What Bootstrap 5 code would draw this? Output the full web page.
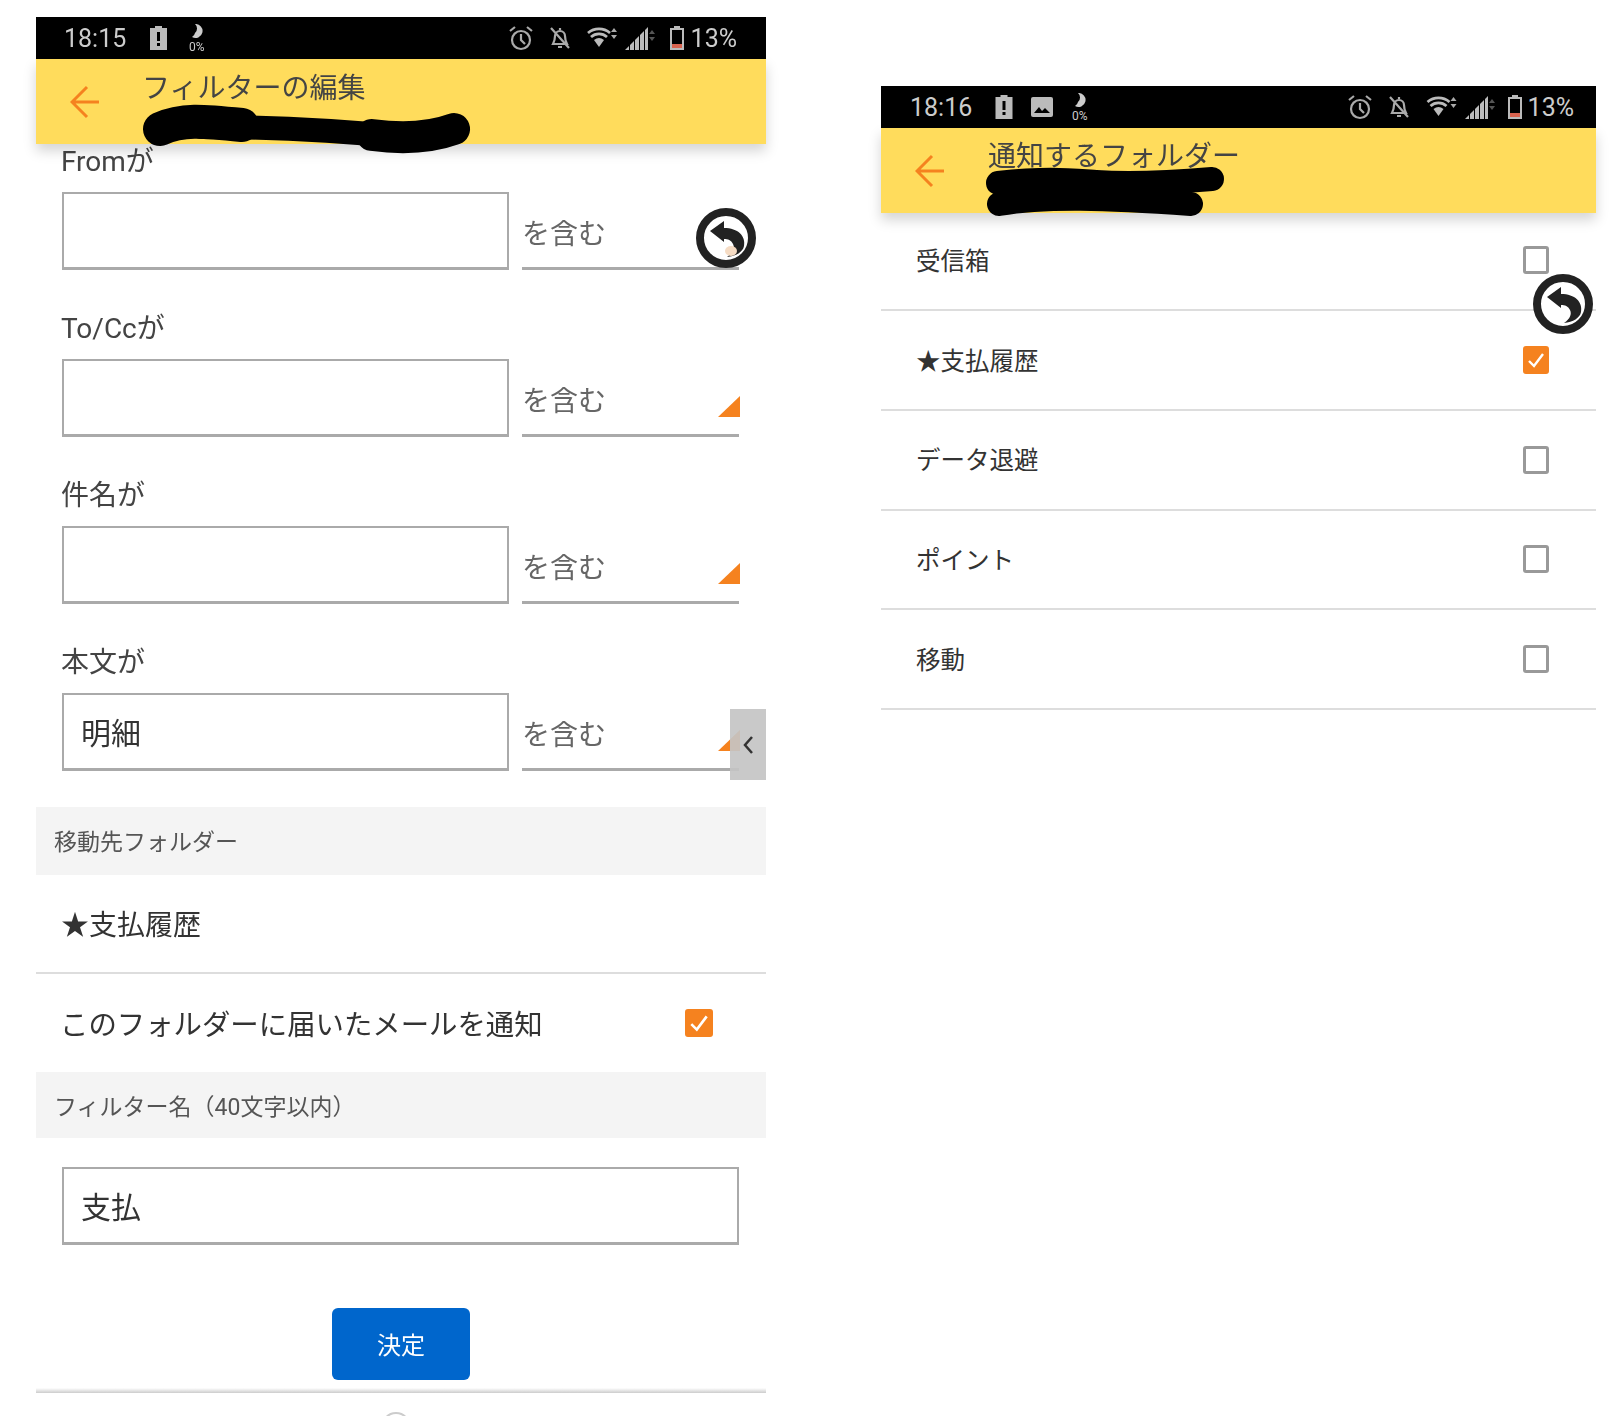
<!DOCTYPE html>
<html lang="ja">
<head>
<meta charset="utf-8">
<title>フィルターの編集</title>
<link rel="stylesheet" href="https://cdn.jsdelivr.net/npm/bootstrap@5.3.0/dist/css/bootstrap.min.css">
<style>
html,body{height:1416px;overflow:hidden;background:#fff}
body{font-family:"Roboto","Noto Sans CJK JP",sans-serif;color:#444}
.sheet{height:1416px;overflow:hidden;padding-left:36px;gap:115px}
.phone-l{width:730px;margin-top:17px;position:relative;filter:blur(.7px)}
.phone-r{width:715px;margin-top:86px;position:relative;filter:blur(.6px)}
.statusbar{height:42px;background:#000;color:#ccc;font-size:25px;line-height:1}
.phone-l .statusbar{padding:0 29px 0 28px}
.phone-r .statusbar{padding:0 22px 0 29px}
.appbar{height:85px;background:#ffdc5c;position:relative;z-index:2;box-shadow:0 7px 12px rgba(0,0,0,.17);padding-left:34px;color:#555}
.appbar-title{font-size:28px;line-height:1;margin-top:16px;margin-left:42px;color:#444}
.phone-r .appbar{padding-left:34px}
.phone-r .appbar-title{margin-left:43px;margin-top:15px}
.back-arrow{margin-top:26px;flex:none}
.scrawl{position:absolute;overflow:visible}
.fld-label{font-size:28px;line-height:34px;padding:1px 0 0 25px;color:#444;height:34px}
.fld{padding:0 27px 0 26px;gap:13px;margin-top:14px;margin-bottom:41px}
.fld-input.form-control{width:447px;height:78px;border:2px solid #aaa;border-bottom-width:3px;border-radius:0;font-size:30px;padding:0 0 2px 17px;color:#333;background:#fff;box-shadow:none}
.fld-select{width:217px;height:78px;border-bottom:3px solid #aaa;position:relative;font-size:28px;color:#666;padding-top:10px}
.corner{position:absolute;right:-1px;bottom:17px;width:0;height:0;border-left:22px solid transparent;border-bottom:21px solid #f5821f}
.band{background:#f4f4f4;color:#555;font-size:23px;padding:4px 0 0 18px}
.band-a{height:68px;margin-top:-5px}
.band-b{height:66px;padding-top:6px}
.row-line{height:99px;border-bottom:2px solid #ddd;font-size:28px;padding:4px 0 0 25px;color:#333}
.row-plain{height:98px;font-size:28.4px;padding-left:24px;padding-right:53px;color:#333}
.row-plain>span{padding-top:6px}
.chk.form-check-input{margin:0;border-radius:3px;border:3px solid #999;background-color:#fff;box-shadow:none;flex:none;opacity:1}
.chk.form-check-input:checked{background-color:#f5821f;border-color:#f5821f;background-size:100% 100%;background-image:url("data:image/svg+xml,%3csvg xmlns='http://www.w3.org/2000/svg' viewBox='0 0 20 20'%3e%3cpath fill='none' stroke='%23fff' stroke-width='2.4' d='M3 11l5 5 9-12'/%3e%3c/svg%3e")}
.chk-l.form-check-input{width:28px;height:28px}
.chk-r.form-check-input{width:26px;height:28px}
.wide-input.form-control{width:677px;margin:29px 0 0 26px;height:78px;border:2px solid #aaa;border-bottom-width:3px;border-radius:0;font-size:30px;padding:0 0 2px 17px;color:#333;background:#fff;box-shadow:none}
.ok-btn.btn{display:block;width:138px;height:72px;margin:63px auto 0;padding:4px 0 0;background:#0066cc;border:0;border-radius:6px;font-size:24px;color:#fff}
.foot-rule{height:5px;margin-top:8px;background:linear-gradient(#fff,#ccc)}
.foot-arc{width:30px;height:30px;border:2px solid #ccc;border-radius:50%;margin:19px 0 0 345px}
.fab{position:absolute;z-index:5;width:60px;height:60px}
.side-tab{position:absolute;z-index:5;left:694px;top:692px;width:36px;height:71px;background:rgba(196,196,196,.92);color:#333}
.folder-list{margin-top:-1.5px}
.list-group-flush>.folder-item.list-group-item{height:99.7px;border:0;border-bottom:2px solid #ddd;border-radius:0;padding:0 47px 0 35px;font-size:24.5px;color:#333}
.list-group-flush>.folder-item.list-group-item:last-child{border-bottom:2px solid #ddd}
.folder-item>span{padding-top:4px}
.ico{flex:none;display:block}
.sp-l{margin-left:24px}.sp-r{margin-left:23px}.sp-b{margin-left:22px}
.st-pct{margin-left:7px}
.st-pct-r{margin-left:6px}
.gap-16{margin-left:16px}.gap-8{margin-left:8px}.gap-15{margin-left:15px}.gap-13{margin-left:13px}.gap-18{margin-left:18px}.gap-19{margin-left:19px}
</style>
</head>
<body>
<svg width="0" height="0" class="position-absolute">
  <defs>
    <symbol id="i-batt-alert" viewBox="0 0 17 24"><path d="M5 0h7v2h5v22H0V2h5z" fill="#bbb"/><path d="M7 6h3v9H7zM7 17h3v3H7z" fill="#000"/></symbol>
    <symbol id="i-moon" viewBox="0 0 16 28"><path d="M6 0a7 7 0 1 1-3 13 6 6 0 0 0 3-4A6 6 0 0 0 6 0z" fill="#ccc"/><text x="0" y="27" font-size="12" fill="#ccc" font-family="Roboto,sans-serif">0%</text></symbol>
    <symbol id="i-alarm" viewBox="0 0 24 26"><g fill="none" stroke="#aaa" stroke-width="2.2"><circle cx="12" cy="15" r="9"/><path d="M12 9v6l4 4M1 6l5-4M23 6l-5-4"/></g></symbol>
    <symbol id="i-bell" viewBox="0 0 22 24"><g fill="none" stroke="#aaa" stroke-width="2.2"><path d="M4 18c1-2 2-4 2-8a5 5 0 0 1 10 0c0 4 1 6 2 8zM9 21h4M11 4V2M2 2l18 20"/></g></symbol>
    <symbol id="i-wifi" viewBox="0 0 30 24"><g fill="none" stroke="#bbb" stroke-width="2.8"><path d="M1 7a17 17 0 0 1 22 0M4 11a12 12 0 0 1 16 0"/></g><path d="M7 14a8 8 0 0 1 10 0l-5 7z" fill="#bbb"/><path d="M27 2l3 4h-6zM27 13l3-4h-6z" fill="#aaa"/></symbol>
    <symbol id="i-signal" viewBox="0 0 30 24"><path d="M0 24l4-4v4zM5 19l4-4v9H5zM10 14l4-4v14h-4zM15 9l4-4v19h-4zM20 4l3-3v23h-3z" fill="#bbb"/><path d="M27 4l3 4h-6zM27 15l3-4h-6z" fill="#555"/></symbol>
    <symbol id="i-batt" viewBox="0 0 14 24"><path d="M4 0h6v2h4v22H0V2h4zM2 4v18h10V4z" fill="#bbb"/><path d="M2 18h10v4H2z" fill="#d9634f"/></symbol>
    <symbol id="i-reply" viewBox="0 0 60 60"><circle cx="30" cy="30" r="26" fill="#fff" stroke="#222" stroke-width="8"/><path d="M14 23L28 13V20C42 20 50 28 48 38C47 44 40 48 31 49C37 45 39 40 37 36C35 32 32 31 28 31V34Z" fill="#222"/></symbol>
    <symbol id="i-back" viewBox="0 0 30 34"><path d="M29 17H3M17 2L2 17l15 15" fill="none" stroke="#f5821f" stroke-width="3"/></symbol>
  </defs>
</svg>
<div class="sheet d-flex align-items-start">

<section class="phone-l">
  <div class="statusbar d-flex align-items-center">
    <span>18:15</span>
    <svg class="ico sp-l" width="17" height="24"><use href="#i-batt-alert"/></svg>
    <svg class="ico sp-b" width="16" height="28"><use href="#i-moon"/></svg>
    <svg class="ico ms-auto" width="24" height="26"><use href="#i-alarm"/></svg>
    <svg class="ico gap-16" width="22" height="24"><use href="#i-bell"/></svg>
    <svg class="ico gap-16" width="30" height="24"><use href="#i-wifi"/></svg>
    <svg class="ico gap-8" width="30" height="24"><use href="#i-signal"/></svg>
    <svg class="ico gap-15" width="14" height="24"><use href="#i-batt"/></svg>
    <span class="st-pct">13%</span>
  </div>
  <header class="appbar d-flex align-items-start">
    <svg class="back-arrow" width="30" height="34"><use href="#i-back"/></svg>
    <div class="appbar-title">フィルターの編集</div>
    <svg class="scrawl" style="left:106px;top:50px" width="330" height="42" viewBox="0 0 330 42" fill="none" stroke="#000" stroke-linecap="round"><path d="M18 20C40 10 60 12 100 16" stroke-width="34"/><path d="M60 18C120 18 200 22 260 28" stroke-width="24"/><path d="M230 26C260 30 290 28 312 20" stroke-width="32"/></svg>
  </header>

  <div class="fld-label">Fromが</div>
  <div class="fld d-flex"><input class="fld-input form-control" readonly aria-label="From"><div class="fld-select d-flex align-items-center">を含む<span class="corner"></span></div></div>
  <div class="fld-label">To/Ccが</div>
  <div class="fld d-flex"><input class="fld-input form-control" readonly aria-label="To"><div class="fld-select d-flex align-items-center">を含む<span class="corner"></span></div></div>
  <div class="fld-label">件名が</div>
  <div class="fld d-flex"><input class="fld-input form-control" readonly aria-label="件名"><div class="fld-select d-flex align-items-center">を含む<span class="corner"></span></div></div>
  <div class="fld-label">本文が</div>
  <div class="fld d-flex"><input class="fld-input form-control" readonly value="明細" aria-label="本文"><div class="fld-select d-flex align-items-center">を含む<span class="corner"></span></div></div>

  <div class="band band-a d-flex align-items-center">移動先フォルダー</div>
  <div class="row-line d-flex align-items-center">★支払履歴</div>
  <div class="row-plain d-flex align-items-center justify-content-between"><span>このフォルダーに届いたメールを通知</span><input class="chk chk-l form-check-input" type="checkbox" checked aria-label="通知"></div>
  <div class="band band-b d-flex align-items-center">フィルター名（40文字以内）</div>
  <input class="wide-input form-control" readonly value="支払" aria-label="フィルター名">
  <button class="ok-btn btn" type="button">決定</button>
  <div class="foot-rule"></div>
  <div class="foot-arc"></div>

  <svg class="fab" style="left:660px;top:191px" viewBox="0 0 60 60"><use href="#i-reply"/><ellipse cx="35" cy="43" rx="6" ry="5" fill="#f6dcc4"/></svg>
  <div class="side-tab d-flex align-items-center justify-content-center"><svg width="12" height="20" viewBox="0 0 12 20" fill="none" stroke="#333" stroke-width="2.5"><path d="M10 2L3 10l7 8"/></svg></div>
</section>

<section class="phone-r">
  <div class="statusbar d-flex align-items-center">
    <span>18:16</span>
    <svg class="ico sp-r" width="18" height="24"><use href="#i-batt-alert"/></svg>
    <svg class="ico gap-18" width="22" height="20" viewBox="0 0 22 20"><rect width="22" height="20" rx="2" fill="#bbb"/><path d="M3 16l5-6 3 4 3-3 5 5z" fill="#000"/></svg>
    <svg class="ico gap-19" width="16" height="28"><use href="#i-moon"/></svg>
    <svg class="ico ms-auto" width="24" height="26"><use href="#i-alarm"/></svg>
    <svg class="ico gap-16" width="22" height="24"><use href="#i-bell"/></svg>
    <svg class="ico gap-16" width="31" height="24"><use href="#i-wifi"/></svg>
    <svg class="ico gap-8" width="30" height="24"><use href="#i-signal"/></svg>
    <svg class="ico gap-13" width="14" height="24"><use href="#i-batt"/></svg>
    <span class="st-pct-r">13%</span>
  </div>
  <header class="appbar d-flex align-items-start">
    <svg class="back-arrow" width="30" height="34"><use href="#i-back"/></svg>
    <div class="appbar-title">通知するフォルダー</div>
    <svg class="scrawl" style="left:105px;top:40px" width="240" height="50" viewBox="0 0 240 50" fill="none" stroke="#000" stroke-linecap="round"><path d="M12 15C60 10 80 12 110 14S190 14 226 11" stroke-width="24"/><path d="M13 36C60 28 120 30 205 36" stroke-width="24"/></svg>
  </header>
  <div class="folder-list list-group list-group-flush">
    <div class="folder-item list-group-item d-flex align-items-center justify-content-between"><span>受信箱</span><input class="chk chk-r form-check-input" type="checkbox" aria-label="受信箱"></div>
    <div class="folder-item list-group-item d-flex align-items-center justify-content-between"><span>★支払履歴</span><input class="chk chk-r form-check-input" type="checkbox" checked aria-label="支払履歴"></div>
    <div class="folder-item list-group-item d-flex align-items-center justify-content-between"><span>データ退避</span><input class="chk chk-r form-check-input" type="checkbox" aria-label="データ退避"></div>
    <div class="folder-item list-group-item d-flex align-items-center justify-content-between"><span>ポイント</span><input class="chk chk-r form-check-input" type="checkbox" aria-label="ポイント"></div>
    <div class="folder-item list-group-item d-flex align-items-center justify-content-between"><span>移動</span><input class="chk chk-r form-check-input" type="checkbox" aria-label="移動"></div>
  </div>
  <svg class="fab" style="left:652px;top:188px" viewBox="0 0 60 60"><use href="#i-reply"/></svg>
</section>

</div>
</body>
</html>
